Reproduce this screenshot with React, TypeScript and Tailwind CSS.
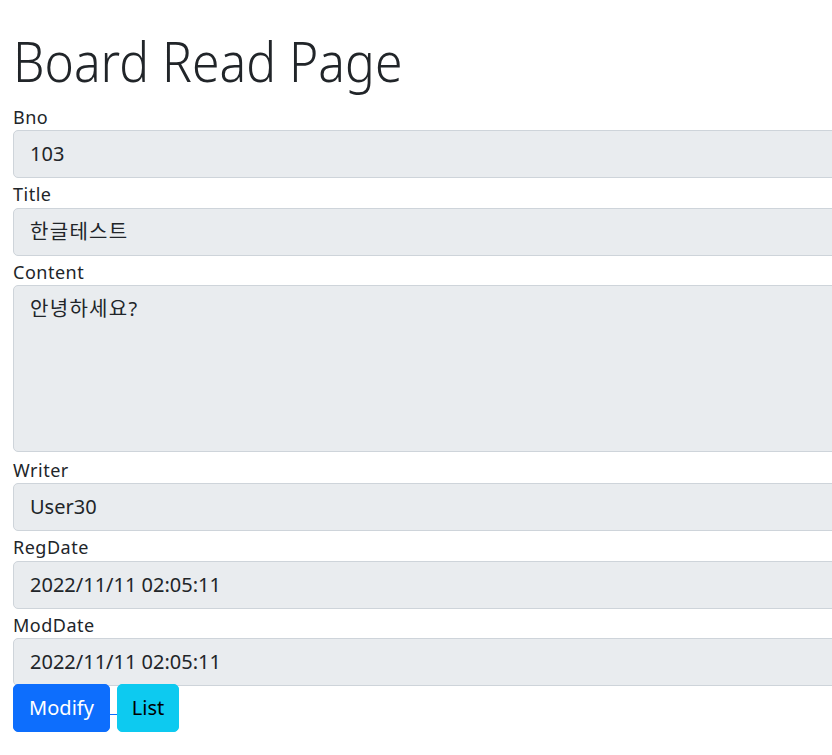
import React from "react";

const font = { fontFamily: '"Noto Sans", "Noto Sans CJK KR", sans-serif' };

function Field({ label, value, tall, extra, ko }: { label: string; value: string; tall?: boolean; extra?: boolean; ko?: boolean }) {
  const track = ko ? "tracking-[1.3px]" : "";
  return (
    <div>
      <div className={`${extra ? "pt-[5.5px]" : "pt-[4px]"} pb-[1.5px] text-[18px] tracking-[0.5px] leading-6 text-[#212529]`}>{label}</div>
      {tall ? (
        <div className={`w-[1400px] h-[167px] border border-[#ced4da] bg-[#e9ecef] rounded-[5px] px-4 py-2 text-[20px] leading-[30px] text-[#212529] ${track}`}>
          {value}
        </div>
      ) : (
        <div className={`w-[1400px] h-[48px] border border-[#ced4da] bg-[#e9ecef] rounded-[5px] px-4 py-2 text-[20px] leading-[30px] text-[#212529] ${track}`}>
          {value}
        </div>
      )}
    </div>
  );
}

export default function App() {
  return (
    <div className="w-[832px] h-[755px] overflow-hidden bg-white" style={font}>
      <div className="pl-[13px]">
        <h1 className="mt-[26.5px] mb-[7px] text-[56px] leading-[67px] font-light text-[#212529]">
          <span className="inline-block origin-left scale-x-[0.89] whitespace-nowrap">Board Read Page</span>
        </h1>
        <Field label="Bno" value="103" />
        <Field label="Title" value="한글테스트" ko />
        <Field label="Content" value="안녕하세요?" tall ko />
        <Field label="Writer" value="User30" extra />
        <Field label="RegDate" value="2022/11/11 02:05:11" />
        <Field label="ModDate" value="2022/11/11 02:05:11" />
        <div className="relative mt-[-2px] flex items-start">
          <div className="h-[48px] w-[97px] rounded-[5px] bg-[#0d6efd] border border-[#0d6efd] flex items-center justify-center text-[20px] text-white">
            Modify
          </div>
          <div className="w-[7px] h-[48px] flex flex-col">
            <div className="h-[30px]" />
            <div className="h-[1px] bg-[#0d6efd]" />
          </div>
          <div className="h-[48px] w-[62px] rounded-[5px] bg-[#0dcaf0] border border-[#0dcaf0] flex items-center justify-center text-[20px] text-black">
            List
          </div>
        </div>
      </div>
    </div>
  );
}
